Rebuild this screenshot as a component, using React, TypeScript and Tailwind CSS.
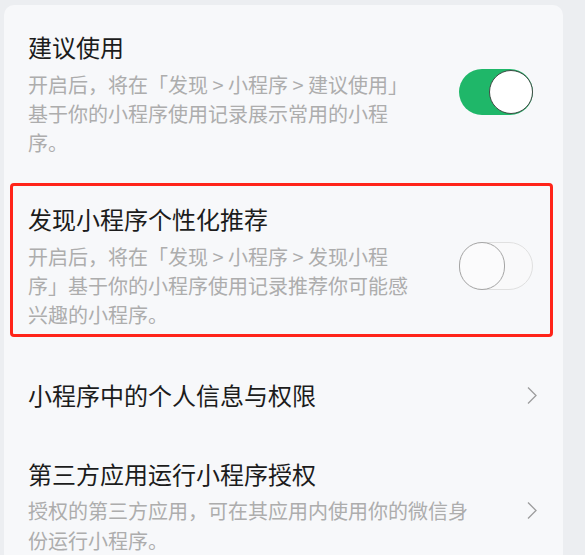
import React from 'react';

const font = { fontFamily: '"Noto Sans CJK SC", "Noto Sans", sans-serif' };

const Toggle = ({ on }: { on: boolean }) =>
  on ? (
    <div className="relative h-[46px] w-[74px] shrink-0 rounded-full bg-[#1fb769]">
      <div className="absolute right-0 top-[1px] h-[44px] w-[44px] rounded-full border border-[#3f4a44] bg-white" />
    </div>
  ) : (
    <div className="relative h-[48px] w-[74px] shrink-0 rounded-full border border-[#e0e0e0] bg-[#f9f9fa]">
      <div className="absolute -left-px -top-px h-[48px] w-[46px] rounded-full border border-[#a5a5a5] bg-[#fbfbfc]" />
    </div>
  );

const Chevron = () => (
  <svg width="12" height="19" viewBox="0 0 12 19" className="shrink-0">
    <path d="M2 1.5 L10 9.5 L2 17.5" fill="none" stroke="#9d9d9d" strokeWidth="1.3" />
  </svg>
);

export default function App() {
  return (
    <div className="h-[555px] w-[585px] overflow-hidden bg-[#eceef1] pt-[5px]" style={font}>
      <div className="ml-[4px] h-[550px] w-[559px] overflow-hidden rounded-t-[10px] bg-[#f7f8fa]">
        {/* 建议使用 */}
        <div className="flex items-start justify-between pl-[24px] pr-[30px] pt-[24px]">
          <div>
            <div className="text-[24px] leading-[36px] text-[#1c1c1c]">建议使用</div>
            <div className="mt-[5px] whitespace-nowrap text-[20px] leading-[29px] text-[#adadad]">
              开启后，将在「发现 &gt; 小程序 &gt; 建议使用」
              <br />
              基于你的小程序使用记录展示常用的小程
              <br />
              序。
            </div>
          </div>
          <div className="mt-[40px]">
            <Toggle on />
          </div>
        </div>

        {/* 发现小程序个性化推荐 */}
        <div className="ml-[6px] mt-[26px] w-[543px] rounded-[4px] border-[3px] border-[#ff2419] pb-[5px] pl-[15px] pr-[17px] pt-[15px]">
          <div className="flex items-start justify-between">
            <div>
              <div className="text-[24px] leading-[36px] text-[#1c1c1c]">发现小程序个性化推荐</div>
              <div className="mt-[5px] whitespace-nowrap text-[20px] leading-[29px] text-[#adadad]">
                开启后，将在「发现 &gt; 小程序 &gt; 发现小程
                <br />
                序」基于你的小程序使用记录推荐你可能感
                <br />
                兴趣的小程序。
              </div>
            </div>
            <div className="mt-[41px]">
              <Toggle on={false} />
            </div>
          </div>
        </div>

        {/* 小程序中的个人信息与权限 */}
        <div className="mt-[40px] flex items-center justify-between pl-[24px] pr-[25px]">
          <div className="text-[24px] leading-[36px] text-[#1c1c1c]">小程序中的个人信息与权限</div>
          <Chevron />
        </div>

        {/* 第三方应用运行小程序授权 */}
        <div className="mt-[43px] pl-[24px] pr-[25px]">
          <div className="text-[24px] leading-[36px] text-[#1c1c1c]">第三方应用运行小程序授权</div>
          <div className="flex items-start justify-between">
            <div className="mt-[4px] whitespace-nowrap text-[20px] leading-[30px] text-[#adadad]">
              授权的第三方应用，可在其应用内使用你的微信身
              <br />
              份运行小程序。
            </div>
            <div className="mt-[9px]">
              <Chevron />
            </div>
          </div>
        </div>
      </div>
    </div>
  );
}
